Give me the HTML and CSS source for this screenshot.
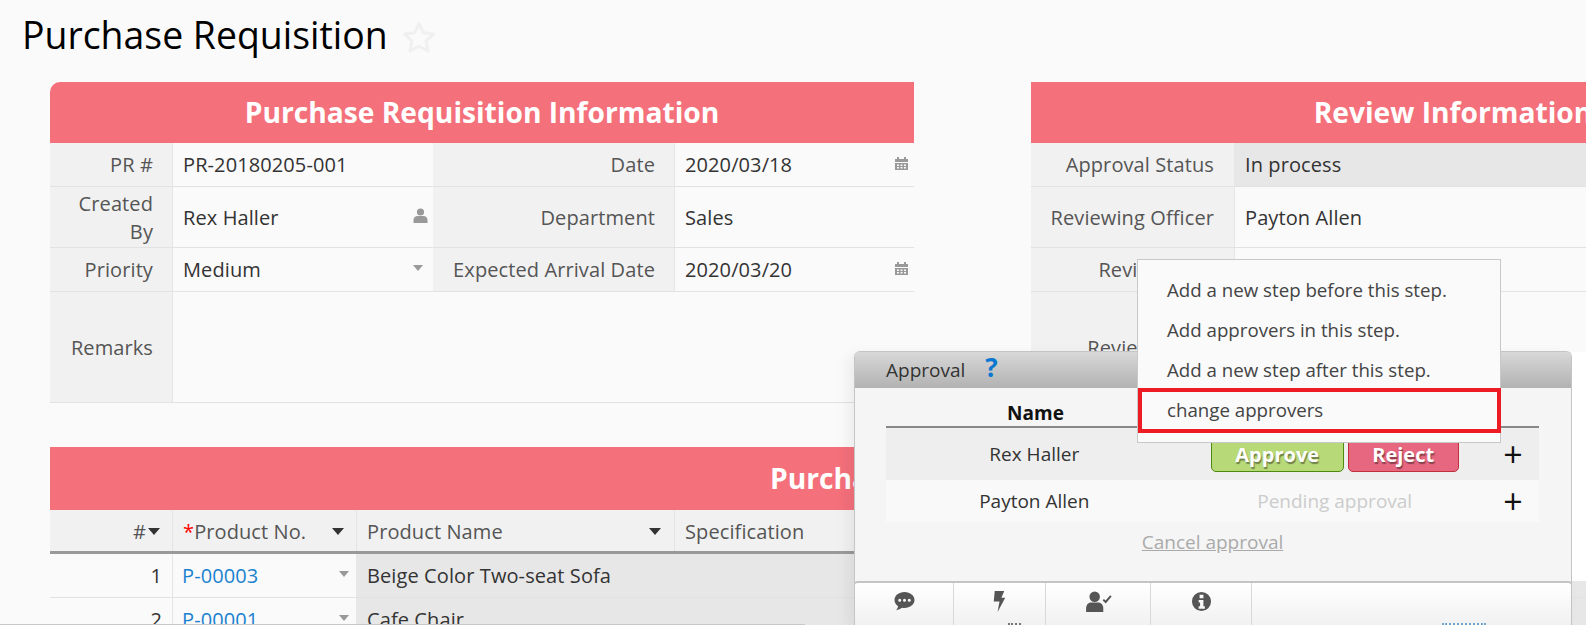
FILE: index.html
```html
<!DOCTYPE html>
<html>
<head>
    <meta charset="UTF-8">
    <title>Purchase Requisition</title>
    <link rel="stylesheet" href="styles.css">
</head>
<body>

    <div class="page">
        <div class="title-row">
            <h1>Purchase Requisition</h1>
            <svg class="star" viewBox="0 0 34 32"><path d="M17 2.500l4.400 9.300 10.100 1.300-7.400 7 1.900 10-9-4.900-9 4.900 1.900-10-7.400-7 10.100-1.300z"/></svg>
        </div>

        <div class="top-panels">
            <div class="panel info-panel">
                <div class="panel-head">Purchase Requisition Information</div>
                <div class="form-row row-s">
                    <div class="lbl c1">PR #</div>
                    <div class="val c2">PR-20180205-001</div>
                    <div class="lbl c3">Date</div>
                    <div class="val c4">2020/03/18
                        <svg class="ic" viewBox="0 0 15 15"><path d="M1 3h2V1h2v2h5V1h2v2h2v3H1zM1 7h13v7H1zM3 8.500v1.500h2V8.500zM6.500 8.500v1.500h2V8.500zM10 8.500v1.500h2V8.500zM3 11v1.500h2V11zM6.500 11v1.500h2V11zM10 11v1.500h2V11z" fill-rule="evenodd"/></svg>
                    </div>
                </div>
                <div class="form-row row-l">
                    <div class="lbl c1">Created By</div>
                    <div class="val c2">Rex Haller
                        <svg class="ic" viewBox="0 0 15 15"><circle cx="7.500" cy="4" r="3.600"/><path d="M0.500 15v-3c0-2.500 2-4 4-4h6c2 0 4 1.500 4 4v3z"/></svg>
                    </div>
                    <div class="lbl c3">Department</div>
                    <div class="val c4">Sales</div>
                </div>
                <div class="form-row row-s">
                    <div class="lbl c1">Priority</div>
                    <div class="val c2">Medium <span class="caret"></span></div>
                    <div class="lbl c3">Expected Arrival Date</div>
                    <div class="val c4">2020/03/20
                        <svg class="ic" viewBox="0 0 15 15"><path d="M1 3h2V1h2v2h5V1h2v2h2v3H1zM1 7h13v7H1zM3 8.500v1.500h2V8.500zM6.500 8.500v1.500h2V8.500zM10 8.500v1.500h2V8.500zM3 11v1.500h2V11zM6.500 11v1.500h2V11zM10 11v1.500h2V11z" fill-rule="evenodd"/></svg>
                    </div>
                </div>
                <div class="form-row row-xl">
                    <div class="lbl c1">Remarks</div>
                    <div class="val remarks"></div>
                </div>
            </div>

            <div class="panel review-panel">
                <div class="panel-head">Review Information</div>
                <div class="form-row row-s">
                    <div class="lbl r1">Approval Status</div>
                    <div class="val r2 readonly">In process</div>
                </div>
                <div class="form-row row-l">
                    <div class="lbl r1">Reviewing Officer</div>
                    <div class="val r2">Payton Allen</div>
                </div>
                <div class="form-row row-s">
                    <div class="lbl r1">Review Date</div>
                    <div class="val r2"></div>
                </div>
                <div class="form-row row-xl">
                    <div class="lbl r1">Review Notes</div>
                    <div class="val r2"></div>
                </div>
            </div>
        </div>

        <div class="panel items-panel">
            <div class="panel-head items-head">Purchase Requisition Details</div>
            <div class="items-row items-top">
                <div class="th t1">#<span class="sort"></span></div>
                <div class="th t2"><span class="req">*</span>Product No.<span class="sort push"></span></div>
                <div class="th t3">Product Name<span class="sort push"></span></div>
                <div class="th t4">Specification</div>
            </div>
            <div class="items-row">
                <div class="td t1 num">1</div>
                <div class="td t2"><a class="link">P-00003</a><span class="caret"></span></div>
                <div class="td t3 grey wide">Beige Color Two-seat Sofa</div>
            </div>
            <div class="items-row">
                <div class="td t1 num">2</div>
                <div class="td t2"><a class="link">P-00001</a><span class="caret"></span></div>
                <div class="td t3 grey wide">Cafe Chair</div>
            </div>
        </div>
    </div>

    <!-- approval dialog floats over the form -->
    <div class="dialog">
        <div class="dialog-head">Approval <span class="help">?</span></div>
        <div class="dialog-body">
            <div class="ap-row ap-head">
                <div class="ap-name">Name</div>
            </div>
            <div class="ap-row ap-current">
                <div class="ap-name">Rex Haller</div>
                <div class="ap-state">
                    <button class="btn approve">Approve</button>
                    <button class="btn reject">Reject</button>
                </div>
                <div class="ap-plus">+</div>
            </div>
            <div class="ap-row ap-next">
                <div class="ap-name">Payton Allen</div>
                <div class="ap-state pending">Pending approval</div>
                <div class="ap-plus">+</div>
            </div>
            <div class="cancel"><a>Cancel approval</a></div>
        </div>
        <div class="dialog-tabs">
            <div class="tab tab1">
                <svg class="tab-ic" viewBox="0 0 22 22"><path d="M11 1C5 1 .5 4.800.5 9.500c0 2.700 1.500 5 3.800 6.600-.2 1.500-1 2.900-2.100 4 2.400-.2 4.700-1.200 6.300-2.500.8.100 1.600.2 2.500.2 6 0 10.500-3.700 10.500-8.300S17 1 11 1zM6 8a1.600 1.600 0 110 3.200A1.600 1.600 0 016 8zm5 0a1.600 1.600 0 110 3.200A1.600 1.600 0 0111 8zm5 0a1.600 1.600 0 110 3.200A1.600 1.600 0 0116 8z" fill-rule="evenodd"/></svg>
            </div>
            <div class="tab tab2">
                <svg class="tab-ic" viewBox="0 0 22 22"><path d="M6 0h10l-3 7h4L9 22l2-11H5z"/></svg>
            </div>
            <div class="tab tab3">
                <svg class="tab-ic wide-ic" viewBox="0 0 28 22"><circle cx="10" cy="6" r="5.500"/><path d="M1 22v-4c0-3.500 2.500-6 5-6h8c2.500 0 5 2.500 5 6v4z"/><path d="M19 9l2.500 2.500L27 5" fill="none" stroke="#555" stroke-width="2"/></svg>
            </div>
            <div class="tab tab4">
                <svg class="tab-ic" viewBox="0 0 22 22"><path d="M11 1a10 10 0 100 20 10 10 0 000-20zM9 4h4v3.500H9zM8 9.500h5V16h1.500v2.500h-6.500V16H9.500v-4H8z" fill-rule="evenodd"/></svg>
            </div>
            <div class="tab tab5"></div>
            <span class="peek peek-dark"></span>
            <span class="peek peek-blue"></span>
        </div>
    </div>

    <div class="menu">
        <div class="menu-item">Add a new step before this step.</div>
        <div class="menu-item">Add approvers in this step.</div>
        <div class="menu-item">Add a new step after this step.</div>
        <div class="menu-item marked">change approvers</div>
    </div>

    <div class="page-edge"></div>

</body>
</html>
```

FILE: styles.css
```css
html, body {
    margin: 0;
    padding: 0;
    height: 625px;
    overflow: hidden;
}

body {
    background-color: #fafafa;
    font-family: "Open Sans", sans-serif;
    font-size: 20px;
    letter-spacing: 0.1px;
    color: #333333;
}

.page {
    width: 2000px;
}

.title-row {
    display: flex;
    align-items: center;
    height: 82px;
    padding-left: 22px;
    box-sizing: border-box;
}

h1 {
    margin: 0 0 14px 0;
    font-size: 37.4px;
    font-weight: 400;
    letter-spacing: 0;
    color: #000000;
}

.star {
    width: 34px;
    height: 32px;
    margin: 0 0 8px 14px;
    fill: none;
    stroke: #f0f0f0;
    stroke-width: 3;
    stroke-linejoin: round;
}

.top-panels {
    display: flex;
    margin-left: 50px;
    gap: 117px;
}

.panel-head {
    height: 61px;
    line-height: 61px;
    background-color: #f4707b;
    color: #ffffff;
    font-size: 28.2px;
    font-weight: 700;
    letter-spacing: 0;
    text-align: center;
}

.info-panel {
    width: 864px;
}

.info-panel .panel-head {
    border-top-left-radius: 10px;
}

.review-panel {
    width: 844px;
}

.form-row {
    display: flex;
    border-bottom: 1px solid #e2e2e2;
    box-sizing: border-box;
}

.row-s { height: 44px; }
.row-l { height: 61px; }
.row-xl { height: 111px; }

.lbl {
    display: flex;
    align-items: center;
    justify-content: flex-end;
    box-sizing: border-box;
    padding: 1px 20px 0;
    background-color: #f1f1f1;
    color: #555555;
    text-align: right;
    line-height: 28px;
}

.val {
    position: relative;
    display: flex;
    align-items: center;
    box-sizing: border-box;
    padding: 0 10px;
    border-left: 1px solid #e6e6e6;
}

.c1 { width: 122px; padding-right: 19px; }
.c2 { width: 261px; }
.c3 { width: 241px; padding-right: 19px; }
.c4 { width: 240px; }
.remarks { flex: 1; }
.r1 { width: 203px; padding-left: 0; white-space: nowrap; }
.r2 { flex: 1; }

.readonly {
    background-color: #e7e7e7;
    border-left: none;
    padding-left: 11px;
}

.ic {
    width: 15px;
    height: 15px;
    fill: #999999;
    margin-left: auto;
    margin-right: -5px;
    margin-bottom: 3px;
}

.caret {
    width: 0;
    height: 0;
    margin-left: auto;
    margin-bottom: 3px;
    border-left: 5px solid transparent;
    border-right: 5px solid transparent;
    border-top: 6px solid #999999;
}

.items-panel {
    margin: 44px 0 0 50px;
    width: 1842px;
}

.items-head {
    height: 63px;
    line-height: 63px;
}

.items-row {
    display: flex;
    height: 44px;
    border-bottom: 1px solid #e2e2e2;
    box-sizing: border-box;
}

.items-top {
    height: 44px;
    background-color: #f1f1f1;
    border-bottom: 3px solid #999999;
}

.th, .td {
    display: flex;
    align-items: center;
    box-sizing: border-box;
    padding: 0 10px;
    border-left: 1px solid #e4e4e4;
}

.th { color: #555555; padding-top: 1px; }
.th.t1 { padding-right: 12px; }
.th.t2 { padding-right: 12px; }
.th.t3 { padding-right: 13px; }
.td.t2 { padding: 0 7px 0 9px; }
.t1 { width: 122px; justify-content: flex-end; border-left: none; }
.t2 { width: 184px; }
.t3 { width: 318px; }
.t4 { flex: 1; }
.wide { flex: 1; }

.grey {
    background-color: #e7e7e7;
    border-left: none;
    padding-left: 11px;
}

.req { color: #ff0000; }

.sort {
    width: 0;
    height: 0;
    margin-left: 2px;
    border-left: 6px solid transparent;
    border-right: 6px solid transparent;
    border-top: 7px solid #333333;
}

.push {
    margin-left: auto;
}

.link { color: #1a82d0; }

.dialog {
    position: absolute;
    left: 854px;
    top: 351px;
    width: 718px;
    height: 274px;
    box-sizing: border-box;
    border: 1px solid #c4c4c4;
    border-bottom: none;
    border-radius: 6px 6px 0 0;
    background-color: #f5f5f5;
    box-shadow: -6px 4px 14px rgba(0, 0, 0, 0.06);
    display: flex;
    flex-direction: column;
    font-size: 19px;
    letter-spacing: 0;
}

/* white strip the dialog leaves on its right */
.dialog::after {
    content: "";
    position: absolute;
    left: 100%;
    top: 0;
    width: 20px;
    bottom: 44px;
    margin-left: 1px;
    background-color: #ffffff;
}

.dialog-head {
    height: 36px;
    line-height: 37px;
    padding-left: 31px;
    background: linear-gradient(#d8d8d8, #b2b2b2);
    color: #333333;
    border-radius: 5px 5px 0 0;
}

.help {
    margin-left: 15px;
    color: #0a78d0;
    font-weight: 700;
    font-size: 26px;
    line-height: 20px;
}

.dialog-body {
    flex: 1;
    padding: 0 32px 0 31px;
}

.ap-row {
    display: flex;
    align-items: center;
}

.ap-name {
    width: 307px;
    text-align: center;
}

.ap-head {
    height: 40px;
    padding-top: 12px;
    border-bottom: 2px solid #888888;
    box-sizing: border-box;
    color: #111111;
    font-weight: 700;
}

.ap-head .ap-name {
    padding-right: 8px;
    box-sizing: border-box;
}

.ap-current {
    height: 52px;
    box-sizing: border-box;
    background-color: #eeeeee;
}

.ap-next {
    height: 42px;
    box-sizing: border-box;
    background-color: #f9f9f9;
}

.ap-state {
    display: flex;
    gap: 4px;
    width: 315px;
    justify-content: center;
}

.pending {
    color: #cccccc;
}

.ap-plus {
    width: 54px;
    margin-left: auto;
    text-align: center;
    font-size: 34px;
    line-height: 32px;
    color: #111111;
}

.btn {
    height: 35px;
    font-family: "Open Sans", sans-serif;
    font-size: 20px;
    font-weight: 700;
    color: #ffffff;
    text-shadow: 1px 2px 1px rgba(0, 0, 0, 0.4);
    border-radius: 5px;
    padding: 0;
}

.approve {
    width: 133px;
    background-color: #b7d978;
    border: 1px solid #4f8a10;
}

.reject {
    width: 111px;
    background-color: #e6677f;
    border: 1px solid #c0303c;
}

.cancel {
    text-align: center;
    margin-top: 7px;
    color: #aaaaaa;
    text-decoration: underline;
}

.dialog-tabs {
    position: relative;
    display: flex;
    height: 44px;
    margin: 0 -1px;
    box-sizing: border-box;
    border: 1px solid #c4c4c4;
    border-top-width: 2px;
    border-bottom: none;
    border-radius: 4px 4px 0 0;
    background: linear-gradient(#ffffff, #f1f1f1);
}

.tab {
    display: flex;
    align-items: flex-start;
    justify-content: center;
    padding-top: 8px;
    box-sizing: border-box;
    border-right: 1px solid #d8d8d8;
}

.tab1 { width: 99px; }
.tab2 { width: 92px; }
.tab3 { width: 105px; }
.tab4 { width: 101px; }
.tab5 { flex: 1; border-right: none; }

.tab-ic {
    width: 21px;
    height: 21px;
    fill: #555555;
}

.wide-ic {
    width: 27px;
}

/* tops of the clipped tab labels at the window edge */
.peek {
    position: absolute;
    bottom: 0;
    height: 0;
    border-top: 2px dotted #777777;
}

.peek-dark {
    left: 153px;
    width: 13px;
}

.peek-blue {
    left: 587px;
    width: 44px;
    border-top-color: #6fa8d8;
}

.menu {
    position: absolute;
    left: 1137px;
    top: 259px;
    width: 364px;
    height: 184px;
    box-sizing: border-box;
    padding-top: 9px;
    border: 1px solid #c8c8c8;
    background-color: #fafafa;
}

.menu-item {
    height: 40px;
    line-height: 42px;
    padding-left: 29px;
    font-size: 18.7px;
    letter-spacing: 0;
    color: #444444;
}

.marked {
    box-sizing: border-box;
    height: 45px;
    margin: -1px -1px 0 0;
    padding-left: 25px;
    line-height: 35px;
    border: 4px solid #ed1c24;
}

.page-edge {
    position: absolute;
    left: 0;
    bottom: 0;
    width: 805px;
    height: 1px;
    background-color: #c8c8c8;
}
```
